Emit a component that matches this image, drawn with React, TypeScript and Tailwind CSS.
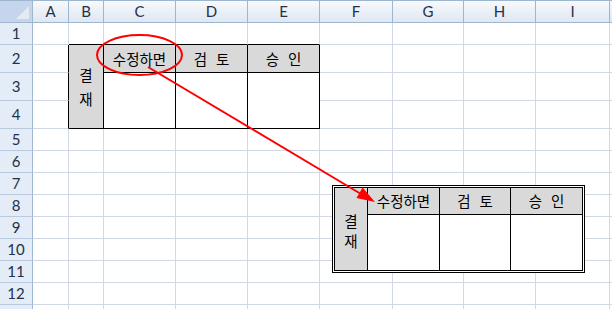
const COLS = ["A", "B", "C", "D", "E", "F", "G", "H", "I", ""];
const ROWS = [1, 2, 3, 4, 5, 6, 7, 8, 9, 10, 11, 12, 13];

type Cell = { text?: string[]; gray?: boolean; span?: number; black?: boolean; spaced?: boolean };

// 결재 table on B2:E4
const cells: Record<string, Cell> = {
  "2,1": { text: ["결", "재"], gray: true, span: 3, black: true },
  "2,2": { text: ["수정하면"], gray: true, black: true },
  "2,3": { text: ["검", "토"], gray: true, black: true, spaced: true },
  "2,4": { text: ["승", "인"], gray: true, black: true, spaced: true },
  "3,2": { span: 2, black: true },
  "3,3": { span: 2, black: true },
  "3,4": { span: 2, black: true },
};
const covered = new Set(["3,1", "4,1", "4,2", "4,3", "4,4"]);

function cellClass(r: number, c: number, cell?: Cell) {
  let right = "border-r-[#d0d7e5]";
  let bottom = "border-b-[#d0d7e5]";
  if (cell?.black) {
    right = "border-r-black";
    bottom = "border-b-black";
  }
  // left edge of table
  if (c === 0 && r >= 2 && r <= 4) right = "border-r-black";
  // top edge of table
  if (r === 1 && c >= 1 && c <= 4) bottom = "border-b-black";
  const bg = cell?.gray ? "bg-[#d9d9d9]" : "bg-white";
  const span = cell?.span === 3 ? "row-span-3" : cell?.span === 2 ? "row-span-2" : "";
  const dir = cell?.spaced ? "flex-row gap-[9px]" : "flex-col";
  return `border-r border-b ${right} ${bottom} ${bg} ${span} flex ${dir} items-center justify-center text-[14.5px] leading-[24px] text-black`;
}

function SecondTable() {
  return (
    <div className="absolute left-[332px] top-[185px] border border-black bg-white p-px">
      <div className="border border-black grid grid-cols-[33px_72px_71px_71px] grid-rows-[27px_55px] text-[14.5px] text-black">
        <div className="row-span-2 bg-[#d9d9d9] border-r border-black flex flex-col items-center justify-center leading-[20px] pt-1">
          <span>결</span>
          <span>재</span>
        </div>
        <div className="bg-[#d9d9d9] border-r border-b border-black flex items-center justify-center">수정하면</div>
        <div className="bg-[#d9d9d9] border-r border-b border-black flex items-center justify-center gap-[9px]">
          <span>검</span>
          <span>토</span>
        </div>
        <div className="bg-[#d9d9d9] border-b border-black flex items-center justify-center gap-[9px]">
          <span>승</span>
          <span>인</span>
        </div>
        <div className="border-r border-black" />
        <div className="border-r border-black" />
        <div />
      </div>
    </div>
  );
}

export default function App() {
  return (
    <div
      className="relative w-[612px] h-[309px] overflow-hidden bg-white"
      style={{ fontFamily: '"Noto Sans CJK KR", "Noto Sans", sans-serif' }}
    >
      <div className="grid grid-cols-[33px_36px_35px_72px_72px_72px_73px_71px_72px_74px_20px] grid-rows-[23px_22px_28px_28px_28px_22px_22px_22px_22px_22px_22px_22px_22px_22px]">
        {/* corner */}
        <div className="relative border-t border-r border-b border-[#9eb6ce] bg-[#c4d5ec]">
          <div className="absolute right-[3px] bottom-[3px] w-0 h-0 border-l-[13px] border-l-transparent border-b-[13px] border-b-[#e3eaf4]" />
        </div>
        {COLS.map((c, i) => (
          <div
            key={c + i}
            className="border-t border-r border-b border-[#9eb6ce] bg-linear-to-b from-[#f7f9fc] to-[#dfe7f2] flex items-center justify-center text-[15px] text-[#22324a] font-['Lato',sans-serif]"
          >
            {c}
          </div>
        ))}

        {ROWS.map((r) => [
          <div
            key={"h" + r}
            className="border-r border-r-[#9eb6ce] border-b border-b-[#b9c9de] bg-[#e4ecf7] flex items-center justify-center text-[15px] text-[#22324a] font-['Lato',sans-serif]"
          >
            {r < 13 ? r : ""}
          </div>,
          ...COLS.map((_, c) => {
            const key = r + "," + c;
            if (covered.has(key)) return null;
            const cell = cells[key];
            return (
              <div key={key} className={cellClass(r, c, cell)}>
                {cell?.text?.map((t) => (
                  <span key={t} className="whitespace-pre">
                    {t}
                  </span>
                ))}
              </div>
            );
          }),
        ])}
      </div>

      <SecondTable />

      {/* red callout */}
      <svg className="absolute left-0 top-0 pointer-events-none" width="612" height="309">
        <ellipse cx="139.5" cy="55" rx="42.5" ry="20" fill="none" stroke="#ff0000" strokeWidth="2" />
        <line x1="148" y1="67" x2="361" y2="194" stroke="#ff0000" strokeWidth="2" />
        <polygon points="375,202 356.5,198 362.6,187.6" fill="#ff0000" />
      </svg>
    </div>
  );
}
